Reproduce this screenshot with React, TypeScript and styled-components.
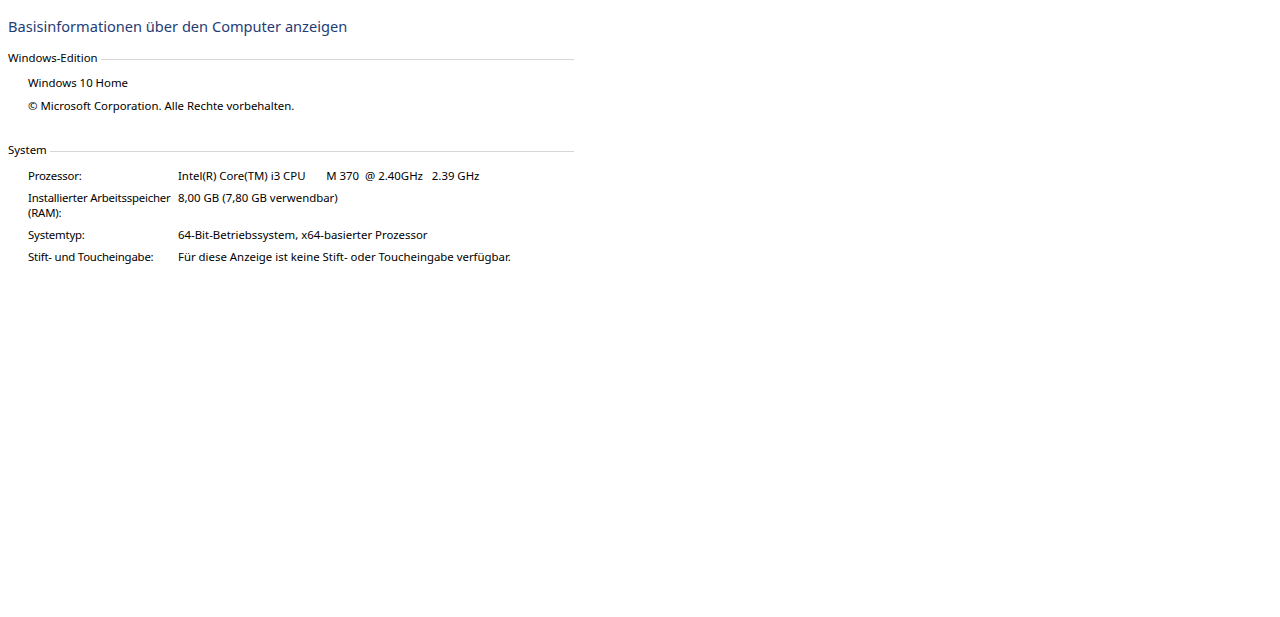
import React from "react"
import styled, { createGlobalStyle } from "styled-components"

const GlobalStyle = createGlobalStyle`
  html, body {
    margin: 0;
    padding: 0;
    background: #ffffff;
  }
  body {
    font-family: "Noto Sans", "Open Sans", Arial, sans-serif;
    color: #000000;
  }
`

const Page = styled.div`
  width: 566px;
  padding: 16px 0 0 8px;
`

const Title = styled.h1`
  margin: 0 0 12px;
  font-size: 14.6px;
  font-weight: 400;
  line-height: 20px;
  color: #1f3c75;
`

const Section = styled.section<{ $gap?: number }>`
  margin-bottom: ${(p) => p.$gap ?? 0}px;
`

const SectionHead = styled.div`
  display: flex;
  align-items: center;
  gap: 3px;
  height: 18px;
  font-size: 11.4px;
  color: #000;
`

const Rule = styled.div`
  flex: 1;
  height: 1px;
  margin-top: 4px;
  background: #d7d7d7;
`

const Lines = styled.div`
  padding: 5px 0 0 20px;
`

const Line = styled.div`
  font-size: 11.4px;
  line-height: 15px;
  padding: 4px 0;
`

const Grid = styled.div`
  display: grid;
  grid-template-columns: 150px 1fr;
  row-gap: 7px;
  padding: 10px 0 0 20px;
  font-size: 11.4px;
  line-height: 15px;
`

const Label = styled.div`
  letter-spacing: -0.2px;
`

const Value = styled.div`
  white-space: pre;
`

const rows = [
  { label: "Prozessor:", value: "Intel(R) Core(TM) i3 CPU       M 370  @ 2.40GHz   2.39 GHz" },
  { label: "Installierter Arbeitsspeicher (RAM):", value: "8,00 GB (7,80 GB verwendbar)" },
  { label: "Systemtyp:", value: "64-Bit-Betriebssystem, x64-basierter Prozessor" },
  { label: "Stift- und Toucheingabe:", value: "Für diese Anzeige ist keine Stift- oder Toucheingabe verfügbar." },
]

export default function App() {
  return (
    <>
      <GlobalStyle />
      <Page>
        <Title>Basisinformationen über den Computer anzeigen</Title>
        <Section $gap={23}>
          <SectionHead>
            Windows-Edition
            <Rule />
          </SectionHead>
          <Lines>
            <Line>Windows 10 Home</Line>
            <Line>© Microsoft Corporation. Alle Rechte vorbehalten.</Line>
          </Lines>
        </Section>
        <Section>
          <SectionHead>
            System
            <Rule />
          </SectionHead>
          <Grid>
            {rows.map((r) => (
              <React.Fragment key={r.label}>
                <Label>{r.label}</Label>
                <Value>{r.value}</Value>
              </React.Fragment>
            ))}
          </Grid>
        </Section>
      </Page>
    </>
  )
}
